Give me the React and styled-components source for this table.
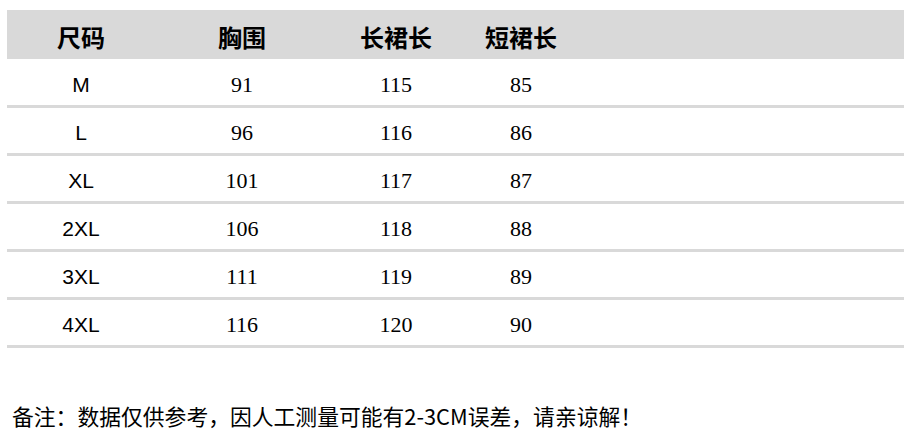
import React from 'react';
import styled, { createGlobalStyle } from 'styled-components';

const GlobalStyle = createGlobalStyle`
    html, body {
        margin: 0;
        padding: 0;
        background: #ffffff;
    }
    body {
        font-family: "Noto Sans CJK SC", sans-serif;
        color: #000;
    }
`;

const Page = styled.div`
    width: 916px;
    height: 438px;
    padding: 10px 12px 0 7px;
    box-sizing: border-box;
    overflow: hidden;
`;

const Table = styled.div`
    width: 897px;
`;

const Row = styled.div`
    display: grid;
    grid-template-columns: 148px 174px 134px 116px 1fr;
    align-items: center;
    height: ${p => (p.head ? '49px' : '45px')};
    background: ${p => (p.head ? '#d9d9d9' : 'transparent')};
    border-bottom: ${p => (p.head ? 'none' : '3px solid #d9d9d9')};
    padding-top: ${p => (p.first ? '1px' : '0')};
`;

const HeadCell = styled.div`
    text-align: center;
    font-family: "Noto Sans CJK SC", sans-serif;
    font-weight: 700;
    font-size: 24px;
    line-height: 1;
    padding-top: 4px;
`;

const SizeCell = styled.div`
    text-align: center;
    font-family: "Liberation Sans", Arial, sans-serif;
    font-size: 21px;
    padding-top: 4px;
`;

const NumCell = styled.div`
    text-align: center;
    font-family: "Liberation Serif", "Times New Roman", serif;
    font-size: 22px;
    padding-top: 4px;
`;

const Note = styled.p`
    margin: 57px 0 0 5px;
    font-family: "Noto Sans CJK SC", sans-serif;
    font-size: 21.8px;
    line-height: 1;
    white-space: nowrap;
`;

const rows = [
    ['M', 91, 115, 85],
    ['L', 96, 116, 86],
    ['XL', 101, 117, 87],
    ['2XL', 106, 118, 88],
    ['3XL', 111, 119, 89],
    ['4XL', 116, 120, 90],
];

const App = () => (
    <Page>
        <GlobalStyle />
        <Table>
            <Row head>
                <HeadCell>尺码</HeadCell>
                <HeadCell>胸围</HeadCell>
                <HeadCell>长裙长</HeadCell>
                <HeadCell>短裙长</HeadCell>
                <div />
            </Row>
            {rows.map(([size, chest, longLen, shortLen], i) => (
                <Row key={size} first={i === 0}>
                    <SizeCell>{size}</SizeCell>
                    <NumCell>{chest}</NumCell>
                    <NumCell>{longLen}</NumCell>
                    <NumCell>{shortLen}</NumCell>
                    <div />
                </Row>
            ))}
        </Table>
        <Note>备注：数据仅供参考，因人工测量可能有2-3CM误差，请亲谅解！</Note>
    </Page>
);

export default App;
